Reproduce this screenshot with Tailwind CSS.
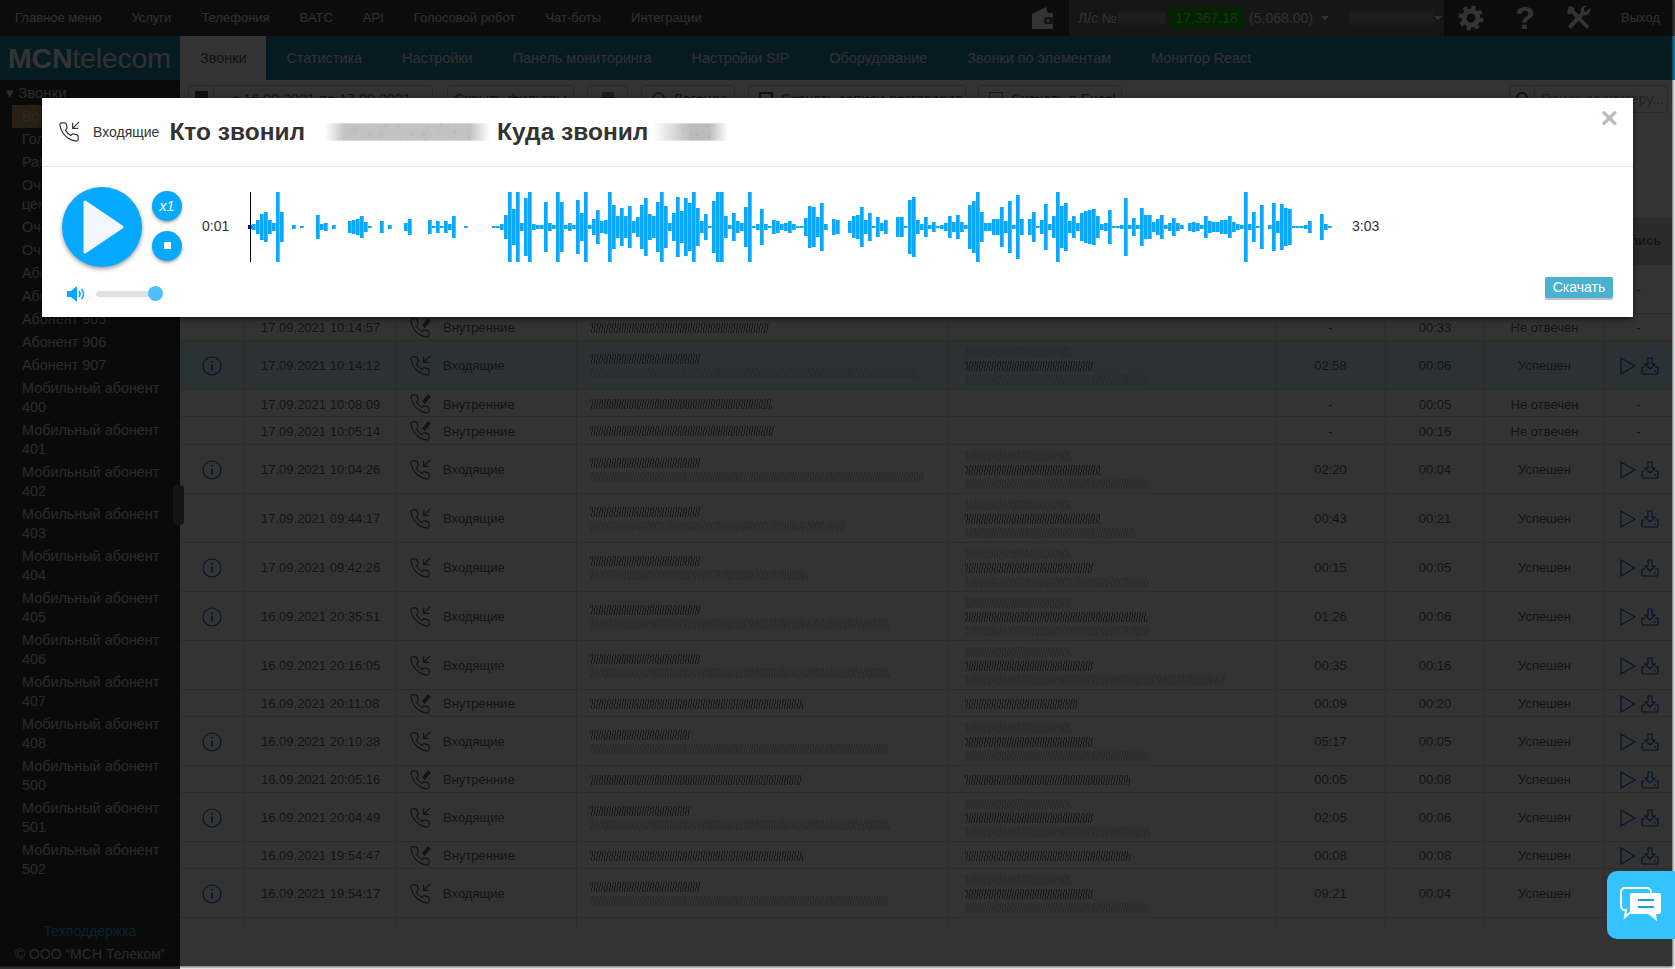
<!DOCTYPE html>
<html lang="ru">
  <head>
    <meta charset="UTF-8" />
    <title>Звонки</title>
    <script src="https://cdn.jsdelivr.net/npm/@tailwindcss/browser@4"></script>
  </head>
  <body class="bg-white [font-family:'Liberation_Sans',sans-serif]">
    <div class="relative w-[1675px] h-[969px] overflow-hidden flex flex-col">
      <!-- Top menu -->
      <div class="h-9 shrink-0 bg-[#3c3c3c] flex items-center pr-[15px] text-[13px] text-[#eee]">
        <nav class="flex gap-[30px] pl-[15px]">
          <span>Главное меню</span><span>Услуги</span><span>Телефония</span><span>ВАТС</span><span>API</span><span>Голосовой робот</span><span>Чат-боты</span><span>Интеграции</span>
        </nav>
        <svg class="ml-auto mr-[15px]" width="23" height="22" viewBox="0 0 23 22"><path d="M1 7 L15 0 L17 6 L22 6 L22 22 L1 22 Z" fill="#fff"/><rect x="13" y="10" width="10" height="7" rx="2" fill="#666"/><circle cx="17" cy="13.500" r="1.500" fill="#fff"/></svg>
        <div class="w-[375px] shrink-0 h-9 bg-[#707070] flex items-center pl-[9px] text-[14px] whitespace-nowrap">
          <span>Л/с №</span>
          <div class="w-[46px] h-[12px] ml-[2px] blur-[1px] bg-[repeating-linear-gradient(90deg,#ddd_0,#ddd_1px,transparent_1px,transparent_3px)]"></div>
          <span class="ml-[5px] w-[73px] h-[22px] bg-[#0cb00c] text-[#8fe88f] text-center leading-[22px]">17,367.18</span>
          <span class="ml-[6px]">(5,068.00)</span>
          <span class="ml-[8px] w-0 h-0 border-x-4 border-x-transparent border-t-4 border-t-white"></span>
          <div class="w-[84px] h-[12px] ml-[21px] blur-[1px] bg-[repeating-linear-gradient(90deg,#ddd_0,#ddd_1px,transparent_1px,transparent_3px)]"></div>
          <span class="w-0 h-0 border-x-4 border-x-transparent border-t-4 border-t-white"></span>
        </div>
        <div class="w-[54px] shrink-0 flex justify-center">
          <svg width="26" height="26" viewBox="0 0 26 26" fill="none" stroke="#fff"><circle cx="13" cy="13" r="7" stroke-width="5"/><circle cx="13" cy="13" r="10.500" stroke-width="4" stroke-dasharray="4.100 4.150"/></svg>
        </div>
        <div class="w-[54px] shrink-0 text-center text-[32px] leading-9 font-bold text-white">?</div>
        <div class="w-[53px] shrink-0 flex justify-center">
          <svg width="26" height="26" viewBox="0 0 26 26" fill="#fff"><path d="M3 1 L9 3 L8 5 L23 21 L21 24 L5 8 L3 10 L1 7 Z"/><path d="M24 3 L20 7 L18 6 L18 3 L21 1 C17 0 14 3 15 7 L2 21 L5 24 L18 10 C22 11 25 8 24 3 Z"/></svg>
        </div>
        <span class="ml-[16px] shrink-0">Выход</span>
      </div>

      <!-- Section tabs -->
      <div class="h-11 shrink-0 bg-[#1e82aa] flex items-center text-[14.400px] text-[#f0f0f0]">
        <div class="w-[180px] pl-[8px] text-[28.500px] tracking-[-0.2px] text-white"><b>MCN</b><span class="text-[#eee]">telecom</span></div>
        <span class="px-5 h-11 leading-[44px] bg-white text-[#555]">Звонки</span>
        <span class="px-5 pt-[1px]">Статистика</span>
        <span class="px-5 pt-[1px]">Настройки</span>
        <span class="px-5 pt-[1px]">Панель мониторинга</span>
        <span class="px-5 pt-[1px]">Настройки SIP</span>
        <span class="px-5 pt-[1px]">Оборудование</span>
        <span class="px-5 pt-[1px]">Звонки по элементам</span>
        <span class="px-5 pt-[1px]">Монитор React</span>
      </div>

      <div class="flex-1 flex min-h-0">
        <!-- Sidebar -->
        <aside class="relative w-[180px] shrink-0 bg-[#333] flex flex-col text-[14.400px] text-[#d2d2d2]">
          <div class="pl-[6px] pt-[4px] leading-[18px] text-[15px]">▾ Звонки</div>
          <ul id="sidebar" class="flex-1 ml-[12px] mt-[3px] leading-[19px]"></ul>
          <div class="h-[50px] border-t border-[#444] text-center leading-[23px] text-[14px]">
            <div class="text-[#3f9fd0]">Техподдержка</div>
            <div>© ООО “МСН Телеком”</div>
          </div>
          <div class="absolute left-[173px] top-[405px] w-[11px] h-[40px] rounded bg-[#666]"></div>
        </aside>

        <!-- Calls table -->
        <main class="flex-1 min-w-0 text-[13px] text-[#666]">
          <div class="flex h-[28px] mt-[5px] pl-[8px] text-[14.400px] leading-[26px]">
            <div class="w-[26px] border border-[#ccc] rounded-l flex justify-center pt-[5px]"><div class="w-[13px] h-[12px] bg-[#555]"></div></div>
            <div class="w-[219px] border border-l-0 border-[#ccc] rounded-r pl-[18px]">с 16.09.2021 по 17.09.2021</div>
            <div class="w-[127px] ml-[14px] border border-[#ccc] rounded text-center">Скрыть фильтры</div>
            <div class="w-[41px] ml-[13px] border border-[#ccc] rounded flex justify-center pt-[6px]"><div class="w-[12px] h-[14px] bg-[#4a90d9]"></div></div>
            <div class="w-[94px] ml-[13px] border border-[#ccc] rounded flex pl-[10px] gap-[8px]"><div class="w-[13px] h-[13px] mt-[6px] rounded-full border-2 border-[#888]"></div>Легенда</div>
            <div class="w-[218px] ml-[13px] border border-[#ccc] rounded flex pl-[10px] gap-[8px] whitespace-nowrap overflow-hidden"><div class="w-[14px] h-[14px] mt-[6px] shrink-0 border-2 border-[#555]"></div>Скачать записи разговоров</div>
            <div class="w-[144px] ml-[12px] border border-[#ccc] rounded flex pl-[10px] gap-[8px]"><div class="w-[14px] h-[14px] mt-[6px] border border-[#888]"></div>Скачать в Excel</div>
            <div class="w-[26px] ml-[387px] border border-[#ccc] rounded-l flex justify-center pt-[6px]"><div class="w-[12px] h-[12px] rounded-full border-2 border-[#555]"></div></div>
            <div class="w-[133px] border border-l-0 border-[#ccc] rounded-r pl-[6px] text-[#aaa] whitespace-nowrap overflow-hidden">Поиск по номеру...</div>
          </div>
          <div class="mt-[105px] h-[711px] overflow-hidden pr-[3px]">
            <div class="grid grid-cols-[64px_151px_181px_372px_327px_110px_99px_120px_1fr] h-[47px] bg-[#d8d8d8] border-b border-[#ddd] items-center font-bold text-center">
              <span></span><span>Дата</span><span>Тип</span><span>Кто звонил</span><span>Куда звонил</span><span>Длительность</span><span>Ожидание</span><span>Статус</span><span>Запись</span>
            </div>
            <div id="rows"></div>
          </div>
        </main>
      </div>

      <!-- Dimmed backdrop -->
      <div class="absolute left-0 top-0 right-[3px] bottom-[3px] bg-black/80 shadow-[0_0_3px_1px_rgba(0,0,0,0.7)]"></div>

      <!-- Record player modal -->
      <div class="absolute left-[42px] top-[98px] w-[1591px] h-[219px] bg-white shadow-[0_2px_6px_rgba(0,0,0,0.6)]">
        <div class="h-[69px] border-b border-[#e5e5e5] flex items-center pl-[16px] text-[#333]">
          <svg width="22" height="22" viewBox="0 0 24 24" fill="none" stroke="#333" stroke-width="1.300"><path d="M16 2v6h6M23 1l-7 7"/><path d="M22 16.920v3a2 2 0 0 1-2.180 2 19.790 19.790 0 0 1-8.630-3.070 19.500 19.500 0 0 1-6-6 19.790 19.790 0 0 1-3.070-8.670A2 2 0 0 1 4.110 2h3a2 2 0 0 1 2 1.720c.13.960.36 1.900.7 2.810a2 2 0 0 1-.45 2.110L8.090 9.910a16 16 0 0 0 6 6l1.270-1.270a2 2 0 0 1 2.110-.45c.91.340 1.850.570 2.810.7A2 2 0 0 1 22 16.92z"/></svg>
          <span class="ml-[13px] text-[14px]">Входящие</span>
          <span class="ml-[10px] text-[24.500px] font-bold">Кто звонил</span>
          <div class="ml-[20px] w-[165px] h-[18px] blur-[0.8px] [mask-image:linear-gradient(90deg,transparent,#000_12%,#000_88%,transparent)] bg-[repeating-linear-gradient(100deg,#888_0,#888_1px,#ddd_1px,#ddd_3px)]"></div>
          <span class="ml-[7px] text-[24.500px] font-bold">Куда звонил</span>
          <div class="ml-[5px] w-[75px] h-[18px] blur-[0.8px] [mask-image:linear-gradient(90deg,transparent,#000_50%,#000_75%,transparent)] bg-[repeating-linear-gradient(100deg,#777_0,#777_1px,#ddd_1px,#ddd_3px)]"></div>
        </div>
        <div class="absolute right-[15px] top-[3px] text-[30px] leading-[34px] font-bold text-[#bbb]">×</div>

        <div class="flex items-center pl-[20px] pt-[20px] text-[14px] text-[#333]">
          <div class="w-20 h-20 rounded-full bg-[#05a9ff] shadow-[0_2px_4px_rgba(0,0,0,0.4)] flex items-center justify-center">
            <svg width="80" height="80" viewBox="0 0 80 80"><path d="M23 15 L60 40 L23 65 Z" fill="#f3f6fa" stroke="#f3f6fa" stroke-width="3" stroke-linejoin="round"/></svg>
          </div>
          <div class="ml-[10px] -mt-[2px] flex flex-col gap-[9.500px]">
            <div class="w-[30px] h-[30px] rounded-full bg-[#05a9ff] shadow-[0_2px_3px_rgba(0,0,0,0.35)] text-white italic text-center leading-[30px]">x1</div>
            <div class="w-[30px] h-[30px] rounded-full bg-[#05a9ff] shadow-[0_2px_3px_rgba(0,0,0,0.35)] flex items-center justify-center"><div class="w-[7px] h-[7px] bg-white"></div></div>
          </div>
          <span class="ml-[20px] -mt-[2px] w-[26px]">0:01</span>
          <svg id="wave" class="ml-[20px]" width="1084" height="70" viewBox="0 0 1084 70"></svg>
          <span class="ml-[20px] -mt-[2px]">3:03</span>
        </div>

        <div class="flex items-start justify-between pl-[25px] pr-[20px] mt-[10px]">
          <div class="flex items-center gap-[11px] h-[22px] mt-[6px]">
            <svg width="18" height="16" viewBox="0 0 18 16" fill="none" stroke="#05a9ff"><path d="M0 5h4l6-5v16l-6-5H0z" fill="#05a9ff" stroke="none"/><path d="M12 5c1.300 1.800 1.300 4.200 0 6" stroke-width="1.500"/><path d="M14.500 3c2.400 3 2.400 7 0 10" stroke-width="1.500"/></svg>
            <div class="relative w-[60px] h-[6px] rounded-full bg-[#e0e0e0]">
              <div class="absolute right-[-7px] top-[-5px] w-[15px] h-[15px] rounded-full bg-[#4dbfff]"></div>
            </div>
          </div>
          <button class="w-[68px] h-[21px] rounded-[2px] bg-[#4bb1d0] text-white text-[14px] leading-[21px] shadow-[0_2px_1px_rgba(0,0,0,0.25)]">Скачать</button>
        </div>
      </div>

      <!-- Chat widget -->
      <div class="absolute right-0 top-[871px] w-[68px] h-[68px] rounded-l-[10px] bg-[#33c4ff] flex items-center justify-center">
        <svg width="42" height="36" viewBox="0 0 42 36"><path d="M6 1h21a4 4 0 0 1 4 4v14a4 4 0 0 1-4 4H13l-8 7 1-7a4 4 0 0 1-5-4V5a4 4 0 0 1 5-4z" fill="none" stroke="#fff" stroke-width="2"/><path d="M12 6h27a2 2 0 0 1 2 2v17a2 2 0 0 1-2 2h-3l1 7-9-7H12a2 2 0 0 1-2-2V8a2 2 0 0 1 2-2z" fill="#fff"/><path d="M18 13h16M18 20h16" stroke="#1ba3c9" stroke-width="2"/></svg>
      </div>
    </div>

    <script>
      const sidebarItems = [
        "Все", "Головной офис", "Рабочие", "Очередь контакт центра", "Очередь 1", "Очередь 2",
        "Абонент 903", "Абонент 904", "Абонент 905", "Абонент 906", "Абонент 907",
        "Мобильный абонент 400", "Мобильный абонент 401", "Мобильный абонент 402", "Мобильный абонент 403",
        "Мобильный абонент 404", "Мобильный абонент 405", "Мобильный абонент 406", "Мобильный абонент 407",
        "Мобильный абонент 408", "Мобильный абонент 500", "Мобильный абонент 501", "Мобильный абонент 502",
      ];
      document.getElementById("sidebar").innerHTML = sidebarItems
        .map((name, i) => `<li class="pl-[10px] pr-[8px] py-[2px] ${i === 0 ? "bg-[#c9a063]" : ""}">${name}</li>`)
        .join("");

      // waveform peaks, one bar every 4px
      const peaks = [
        4,6,14,26,30,14,8,70,30,0,0,4,0,2,0,0,0,24,6,8,0,4,0,0,0,12,14,16,22,10,2,0,0,12,0,4,0,0,0,8,16,0,0,0,0,14,2,12,2,12,6,22,0,0,2,0,0,0,0,0,0,2,2,6,24,70,36,70,
        8,58,70,6,4,4,50,8,4,70,50,4,8,4,54,28,70,4,16,34,12,14,70,44,22,38,22,42,12,20,44,58,26,22,50,70,42,8,28,60,32,58,48,70,38,12,26,2,52,70,70,22,4,28,12,8,40,70,2,6,36,6,2,14,12,6,8,12,6,2,
        2,18,42,40,20,48,6,0,16,14,0,0,12,22,24,40,14,28,2,20,8,14,0,0,20,20,2,54,60,14,6,20,4,10,2,4,8,22,10,24,10,4,44,52,70,30,8,8,16,16,40,12,52,4,64,16,0,16,30,2,14,46,6,22,70,
        42,48,12,22,8,28,32,34,36,22,6,8,34,2,2,4,58,4,18,4,38,24,24,10,16,24,4,8,18,8,4,0,8,10,8,4,22,12,10,10,14,14,22,10,6,4,70,6,30,2,44,0,4,48,12,46,38,36,2,2,2,4,12,0,0,26,6,2,
      ];
      document.getElementById("wave").innerHTML =
        peaks
          .map((h, i) => `<rect x="${i * 4}" y="${35 - h / 2}" width="3.7" height="${h}" fill="${i === 0 ? "#0000e0" : "#0aa9ff"}"/>`)
          .join("") + `<rect x="2" y="0" width="1" height="70" fill="#000"/>`;

      const smear = (w, dim) =>
        `<div class="h-[10px] blur-[0.5px] bg-[repeating-linear-gradient(100deg,#555_0,#555_1px,transparent_1px,transparent_2.500px)] ${dim ? "opacity-25" : "opacity-70"}" style="width:${w}px"></div>`;

      const phone = (inbound) => `<svg width="22" height="22" viewBox="0 0 24 24" fill="none" stroke="#555" stroke-width="1.200">
        ${inbound ? '<path d="M16 2v6h6M23 1l-7 7"/>' : '<path d="M15 9l6-7 2 2-6 7z" fill="#777"/>'}
        <path d="M22 16.920v3a2 2 0 0 1-2.180 2 19.790 19.790 0 0 1-8.630-3.070 19.500 19.500 0 0 1-6-6 19.790 19.790 0 0 1-3.070-8.670A2 2 0 0 1 4.110 2h3a2 2 0 0 1 2 1.720c.13.960.36 1.900.7 2.810a2 2 0 0 1-.45 2.110L8.090 9.910a16 16 0 0 0 6 6l1.270-1.270a2 2 0 0 1 2.110-.45c.91.340 1.850.570 2.810.7A2 2 0 0 1 22 16.92z"/></svg>`;

      const info = `<svg width="20" height="20" viewBox="0 0 20 20" fill="none" stroke="#0a5fd0" stroke-width="1.200"><circle cx="10" cy="10" r="9"/><path d="M10 8.500v6M10 5v1.800" stroke-width="1.600"/></svg>`;

      const record = `<div class="flex items-center gap-[5px] pl-[15px]">
        <svg width="16" height="18" viewBox="0 0 16 18" fill="none" stroke="#0a5fd0" stroke-width="1.200"><path d="M1 1l14 8-14 8z"/></svg>
        <svg width="18" height="18" viewBox="0 0 18 18" fill="none" stroke="#0a5fd0" stroke-width="1.200"><path d="M7 1h4v6h3l-5 5-5-5h3z"/><path d="M1 10v6a1 1 0 0 0 1 1h14a1 1 0 0 0 1-1v-6h-3M4 10H1M13 14h2"/></svg>
      </div>`;

      // date, inbound, tall, info, talk, wait, status, recorded, caller smears, callee smears
      const calls = [
        ["", true, true, false, "", "", "", false, [], []],
        ["17.09.2021 10:14:57", false, false, false, "-", "00:33", "Не отвечен", false, [179], []],
        ["17.09.2021 10:14:12", true, true, true, "02:58", "00:06", "Успешен", true, [110, 327], [106, 128, 183]],
        ["17.09.2021 10:08:09", false, false, false, "-", "00:05", "Не отвечен", false, [182], []],
        ["17.09.2021 10:05:14", false, false, false, "-", "00:16", "Не отвечен", false, [184], []],
        ["17.09.2021 10:04:26", true, true, true, "02:20", "00:04", "Успешен", true, [110, 333], [106, 136, 185]],
        ["17.09.2021 09:44:17", true, true, false, "00:43", "00:21", "Успешен", true, [110, 255], [106, 136, 170]],
        ["17.09.2021 09:42:26", true, true, true, "00:15", "00:05", "Успешен", true, [110, 218], [106, 128, 183]],
        ["16.09.2021 20:35:51", true, true, true, "01:26", "00:06", "Успешен", true, [110, 299], [106, 182, 185]],
        ["16.09.2021 20:16:05", true, true, false, "00:35", "00:16", "Успешен", true, [110, 299], [106, 128, 260]],
        ["16.09.2021 20:11:08", false, false, false, "00:09", "00:20", "Успешен", true, [213], [112]],
        ["16.09.2021 20:10:38", true, true, true, "05:17", "00:05", "Успешен", true, [100, 299], [106, 128, 185]],
        ["16.09.2021 20:05:16", false, false, false, "00:05", "00:08", "Успешен", true, [212], [165]],
        ["16.09.2021 20:04:49", true, true, true, "02:05", "00:06", "Успешен", true, [100, 299], [106, 128, 185]],
        ["16.09.2021 19:54:47", false, false, false, "00:08", "00:08", "Успешен", true, [213], [165]],
        ["16.09.2021 19:54:17", true, true, true, "09:21", "00:04", "Успешен", true, [110, 299], [106, 128, 185]],
        ["", true, true, false, "", "", "", false, [100], []],
      ];

      document.getElementById("rows").innerHTML = calls
        .map((c, i) => {
          const [date, inbound, tall, hasInfo, talk, wait, status, recorded, from, to] = c;
          const highlight = i === 2 ? "bg-[#d5f7ff]" : "";
          const height = tall ? "h-[49px]" : "h-[27.200px]";
          const center = "border-l border-[#ddd] h-full pt-[2px] flex items-center justify-center";
          return `<div class="grid grid-cols-[64px_151px_181px_372px_327px_110px_99px_120px_1fr] border-b border-[#ddd] box-border ${height} ${highlight}">
            <div class="flex items-center pl-[22px] pt-[2px]">${hasInfo ? info : ""}</div>
            <div class="border-l border-[#ddd] h-full pt-[2px] flex items-center pl-[16px]">${date}</div>
            <div class="border-l border-[#ddd] h-full pt-[2px] flex items-center pl-[13px] gap-[12px]">${date ? phone(inbound) : ""}<span>${date ? (inbound ? "Входящие" : "Внутренние") : ""}</span></div>
            <div class="border-l border-[#ddd] h-full pt-[2px] flex flex-col justify-center gap-[4px] pl-[13px]">${from.map((w, n) => smear(w, from.length > 1 && n === 1)).join("")}</div>
            <div class="border-l border-[#ddd] h-full pt-[2px] flex flex-col justify-center gap-[4px] pl-[16px]">${to.map((w, n) => smear(w, to.length > 1 && n !== 1)).join("")}</div>
            <div class="${center}">${talk}</div>
            <div class="${center}">${wait}</div>
            <div class="${center}">${status}</div>
            ${recorded ? `<div class="border-l border-[#ddd] h-full pt-[2px] flex items-center">${record}</div>` : `<div class="${center}">-</div>`}
          </div>`;
        })
        .join("");
    </script>
  </body>
</html>
